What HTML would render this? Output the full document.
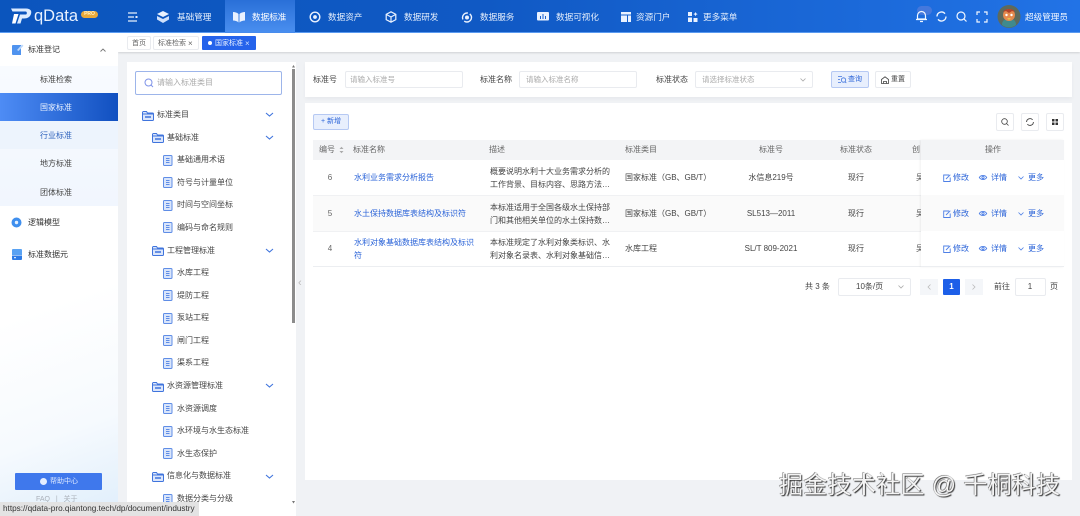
<!DOCTYPE html>
<html lang="zh-CN"><head><meta charset="utf-8"><title>qData</title>
<style>
*{box-sizing:border-box;margin:0;padding:0}
html,body{width:1080px;height:516px;overflow:hidden;background:#f0f2f5}
body{position:relative;font-family:"Liberation Sans","Noto Sans CJK SC",sans-serif;color:#444}
#w{position:absolute;left:0;top:0;width:1080px;height:516px;overflow:hidden;filter:blur(.3px)}
.a,.t,svg.i{position:absolute}
.t{white-space:nowrap;line-height:12px;font-size:8px;height:12px}
.c{transform:translateX(-50%)}
.n{font-size:8.6px;color:#e6effc}
.l{color:#2a63d8}
.g{color:#aaa}
.h{color:#666}
.box{position:absolute;background:#fff;border:1px solid #e9ebef;border-radius:2px}
svg.i{overflow:visible}
</style></head><body>
<svg width="0" height="0" style="position:absolute"><defs>
<g id="fo"><path d="M.5 2.5a1 1 0 0 1 1-1h3l1 1.500h5a1 1 0 0 1 1 1v5.500a1 1 0 0 1-1 1h-9a1 1 0 0 1-1-1z" fill="#dbe6fb" stroke="#3f74dd"/><path d="M.5 4h11" stroke="#3f74dd"/><path d="M3 7h6" stroke="#3f74dd" stroke-width="1.500"/></g>
<g id="do"><rect x=".5" y=".5" width="8.500" height="10" rx="1" fill="#d9e5fb" stroke="#5f8de6"/><path d="M3 3.500h3.500M3 5.500h3.500M3 7.500h3.500" stroke="#5f8de6" stroke-width=".9"/></g>
<path id="dn" d="M0 0l3.500 3 3.500-3" fill="none" stroke="#3f74dd" stroke-width="1.100"/>
<g id="ed" fill="none" stroke="#4f80e6" stroke-width=".9"><path d="M6 1H.7v6.500h6.500V3.500"/><path d="M3 5l4.300-4.300"/></g>
<g id="ey" fill="none" stroke="#4f80e6" stroke-width=".9"><path d="M.3 3.500C2 .8 6 .8 7.700 3.500 6 6.200 2 6.200.3 3.500z"/><circle cx="4" cy="3.500" r="1.100"/></g>
</defs></svg>
<div id="w">
<!-- header -->
<div class="a" style="left:0;top:0;width:1080px;height:33px;background:linear-gradient(90deg,#0b55bd 0%,#1059c4 45%,#2273e6 100%);border-bottom:1px solid #5b9cf2"></div>
<div class="a" style="left:225px;top:0;width:70px;height:33px;background:linear-gradient(180deg,#2a70d8,#4a8ff0)"></div>
<svg class="i" style="left:11px;top:8px" width="21" height="16" viewBox="0 0 21 16"><path d="M0 .5h15c4.500 0 6 2.500 5 5.500-1 3-3.500 4.500-7 4.500h-2l-1.500 5H6l3-9h6c1 0 1.500-3-.5-3H1.500z" fill="#dcecff"/><path d="M3 6h4.500L4.500 15.500H1z" fill="#fff"/></svg>
<div class="t" style="left:34px;top:6px;font-size:16.500px;line-height:20px;height:20px;color:#e8f1ff">qData</div>
<div class="a" style="left:81px;top:11px;width:17px;height:7px;border-radius:3.500px;background:#e9a93b;color:#fff2c8;font-size:5px;line-height:7px;text-align:center;font-weight:bold">PRO</div>
<svg class="i" style="left:128px;top:12px" width="10" height="10" viewBox="0 0 10 10"><path d="M0 1h9M0 5h6M0 9h9" stroke="#e6effc" stroke-width="1.200"/><rect x="7.500" y="4" width="2" height="2" fill="#e6effc"/></svg>
<svg class="i" style="left:157px;top:11px" width="12" height="12" viewBox="0 0 12 12"><path d="M6 0l6 3-6 3-6-3z" fill="#eaf2ff"/><path d="M0 5l6 3 6-3v3.500L6 12 0 8.500z" fill="#cfe0fb"/></svg>
<div class="t n" style="left:177px;top:11px">基础管理</div>
<svg class="i" style="left:233px;top:11px" width="12" height="12" viewBox="0 0 12 12"><path d="M0 1c2 0 4 .5 5.500 2v8.500C4 10 2 9.500 0 9.500zM12 1c-2 0-4 .5-5.500 2v8.500C8 10 10 9.500 12 9.500z" fill="#eaf2ff"/></svg>
<div class="t n" style="left:252px;top:11px;color:#fff">数据标准</div>
<svg class="i" style="left:309px;top:11px" width="12" height="12" viewBox="0 0 12 12"><circle cx="6" cy="6" r="4.800" fill="none" stroke="#eaf2ff" stroke-width="1.400"/><circle cx="6" cy="6" r="1.900" fill="#eaf2ff"/></svg>
<div class="t n" style="left:328px;top:11px">数据资产</div>
<svg class="i" style="left:385px;top:11px" width="12" height="12" viewBox="0 0 12 12"><path d="M6 .8l4.800 2.600v5.200L6 11.200 1.200 8.600V3.400zM1.200 3.400L6 6l4.800-2.600M6 6v5.200" fill="none" stroke="#eaf2ff" stroke-width="1.200"/></svg>
<div class="t n" style="left:404px;top:11px">数据研发</div>
<svg class="i" style="left:461px;top:11px" width="12" height="12" viewBox="0 0 12 12"><circle cx="6" cy="6.500" r="4.500" fill="none" stroke="#eaf2ff" stroke-width="1.400" stroke-dasharray="10 2"/><circle cx="6" cy="6.500" r="2" fill="#eaf2ff"/></svg>
<div class="t n" style="left:480px;top:11px">数据服务</div>
<svg class="i" style="left:537px;top:12px" width="12" height="10" viewBox="0 0 12 10"><rect width="12" height="8.500" rx="1" fill="#eaf2ff"/><path d="M3.500 7V4M6 7V2M8.500 7V4" stroke="#1a62cf" stroke-width="1"/></svg>
<div class="t n" style="left:556px;top:11px">数据可视化</div>
<svg class="i" style="left:621px;top:12px" width="10" height="10" viewBox="0 0 10 10"><path d="M0 0h10v2.500H0zM0 3.500h6V10H0zM7 3.500h3V10H7z" fill="#eaf2ff"/></svg>
<div class="t n" style="left:636px;top:11px">资源门户</div>
<svg class="i" style="left:688px;top:12px" width="10" height="10" viewBox="0 0 10 10"><path d="M0 0h4v4H0zM0 5.500h4v4.500H0zM5.500 6h4v4h-4z" fill="#eaf2ff"/><path d="M7.500 0l.7 1.400 1.500.7-1.500.7-.7 1.500-.7-1.500-1.500-.7 1.500-.7z" fill="#eaf2ff"/></svg>
<div class="t n" style="left:703px;top:11px">更多菜单</div>
<div class="a" style="left:917px;top:6px;width:15px;height:9px;border-radius:5px;background:#5a7fdc;opacity:.65"></div>
<svg class="i" style="left:916px;top:10px" width="11" height="12" viewBox="0 0 11 12"><path d="M1.500 9V5.500a4 4 0 0 1 8 0V9zM0 9.500h11M4 11.500h3" fill="none" stroke="#f0f6ff" stroke-width="1.200"/></svg>
<svg class="i" style="left:936px;top:11px" width="11" height="11" viewBox="0 0 11 11"><path d="M1 5.500a4.500 4.500 0 0 1 8-2.800M10 5.500a4.500 4.500 0 0 1-8 2.800" fill="none" stroke="#f0f6ff" stroke-width="1.300"/></svg>
<svg class="i" style="left:956px;top:11px" width="11" height="11" viewBox="0 0 11 11"><circle cx="5" cy="5" r="4" fill="none" stroke="#f0f6ff" stroke-width="1.200"/><path d="M8 8l2.500 2.500" stroke="#f0f6ff" stroke-width="1.200"/></svg>
<svg class="i" style="left:977px;top:12px" width="10" height="10" viewBox="0 0 10 10"><path d="M0 3V0h3M7 0h3v3M10 7v3H7M3 10H0V7" fill="none" stroke="#f0f6ff" stroke-width="1.200"/></svg>
<svg class="i" style="left:997px;top:5px" width="24" height="23" viewBox="0 0 24 23"><circle cx="12" cy="11.500" r="11.500" fill="#5d6a5c"/><path d="M5 20c0-5 3-6 7-6s7 1 7 6a11.500 11.500 0 0 1-14 0z" fill="#3f8a8d"/><circle cx="12" cy="10" r="6" fill="#e58a4e"/><path d="M6 7c2-4 10-4 12 0l-3-1-3 2-3-2z" fill="#b3432c"/><circle cx="9.500" cy="10" r="1.200" fill="#fff"/><circle cx="14.500" cy="10" r="1.200" fill="#fff"/><path d="M10 13h4l-2 2z" fill="#e8c24a"/></svg>
<div class="t" style="left:1025px;top:11px;font-size:8.600px;color:#f0f6ff">超级管理员</div>

<!-- tabs -->
<div class="a" style="left:118px;top:33px;width:962px;height:19px;background:#fff;box-shadow:0 1px 2px rgba(0,0,0,.14)"></div>
<div class="box" style="left:127px;top:36px;width:24px;height:14px"></div>
<div class="t c h" style="left:139px;top:37.500px;font-size:7px">首页</div>
<div class="box" style="left:153px;top:36px;width:46px;height:14px"></div>
<div class="t h" style="left:158px;top:37.500px;font-size:7px">标准检索</div>
<div class="t h" style="left:188px;top:37.500px;font-size:8px">×</div>
<div class="a" style="left:202px;top:36px;width:54px;height:14px;background:#2563eb;border-radius:1px"></div>
<div class="a" style="left:208px;top:41px;width:4px;height:4px;border-radius:50%;background:#fff"></div>
<div class="t" style="left:215px;top:37.500px;font-size:7px;color:#e6efff">国家标准</div>
<div class="t" style="left:245px;top:37.500px;color:#cfe0ff">×</div>

<!-- sidebar -->
<div class="a" style="left:0;top:33px;width:118px;height:483px;background:linear-gradient(160deg,#fff 55%,#f6fafe 80%,#dfeefb 100%)"></div>
<div class="a" style="left:0;top:66px;width:118px;height:140px;background:linear-gradient(180deg,#f8fbff,#f1f6fe)"></div>
<div class="a" style="left:0;top:93px;width:118px;height:28px;background:linear-gradient(90deg,#4e8cf5,#1150c0)"></div>
<div class="a" style="left:0;top:121px;width:118px;height:28px;background:#edf4fd"></div>
<svg class="i" style="left:12px;top:44px" width="12" height="11" viewBox="0 0 12 11"><path d="M0 2a1 1 0 0 1 1-1h8v10H1a1 1 0 0 1-1-1z" fill="#4f93ef"/><path d="M5 6l5-5.500 1.500 1.200L6.500 7z" fill="#bcd8fb"/></svg>
<div class="t" style="left:28px;top:43.500px;color:#333">标准登记</div>
<svg class="i" style="left:100px;top:48px" width="6" height="4" viewBox="0 0 6 4"><path d="M.5 3.500L3 1l2.500 2.500" fill="none" stroke="#777" stroke-width=".9"/></svg>
<div class="t" style="left:40px;top:73.500px;color:#444">标准检索</div>
<div class="t" style="left:40px;top:101.500px;color:#eaf2ff">国家标准</div>
<div class="t" style="left:40px;top:129.500px;color:#2f63bd">行业标准</div>
<div class="t" style="left:40px;top:158px;color:#444">地方标准</div>
<div class="t" style="left:40px;top:186.500px;color:#444">团体标准</div>
<svg class="i" style="left:11px;top:217px" width="11" height="11" viewBox="0 0 11 11"><circle cx="5.500" cy="5.500" r="5" fill="#3f8fee"/><circle cx="5.500" cy="5.500" r="1.700" fill="#e5f1ff"/></svg>
<div class="t" style="left:28px;top:216.500px;color:#333">逻辑模型</div>
<svg class="i" style="left:12px;top:249px" width="10" height="11" viewBox="0 0 10 11"><path d="M0 1a1 1 0 0 1 1-1h8a1 1 0 0 1 1 1v5H0z" fill="#59a2f3"/><path d="M0 6.500h10V10a1 1 0 0 1-1 1H1a1 1 0 0 1-1-1z" fill="#2d7be6"/><path d="M2 8.700h2" stroke="#fff"/></svg>
<div class="t" style="left:28px;top:248.500px;color:#333">标准数据元</div>
<div class="a" style="left:15px;top:473px;width:87px;height:17px;background:#3f78ec;border-radius:1px"></div>
<div class="a" style="left:40px;top:478px;width:7px;height:7px;border-radius:50%;background:#e5eeff"></div>
<div class="t" style="left:50px;top:476px;font-size:7px;color:#dfeaff">帮助中心</div>
<div class="t" style="left:36px;top:494px;font-size:7px;color:#aab0b8">FAQ &nbsp; | &nbsp; 关于</div>

<!-- tree panel -->
<div class="a" style="left:127px;top:62px;width:169px;height:454px;background:#fff"></div>
<div class="a" style="left:135px;top:71px;width:147px;height:24px;background:#fff;border:1px solid #9db5ea;border-radius:2px"></div>
<svg class="i" style="left:144px;top:78px" width="10" height="10" viewBox="0 0 10 10"><circle cx="4.500" cy="4.500" r="3.500" fill="none" stroke="#7f93e8" stroke-width="1"/><path d="M7 7l2 2" stroke="#7f93e8"/></svg>
<div class="t g" style="left:157px;top:77px">请输入标准类目</div>
<div class="a" style="left:292px;top:69px;width:3px;height:254px;background:#8c8c8c"></div>
<svg class="i" style="left:292px;top:64.500px" width="3" height="3"><path d="M1.500 0L3 2.500H0z" fill="#777"/></svg>
<svg class="i" style="left:292px;top:501px" width="3" height="3"><path d="M1.500 2.500L3 0H0z" fill="#777"/></svg>
<svg class="i" style="left:142px;top:110px" width="12" height="11" viewBox="0 0 12 11"><use href="#fo"/></svg>
<div class="t" style="left:157px;top:109px">标准类目</div>
<svg class="i" style="left:266px;top:113px" width="7" height="4"><use href="#dn"/></svg>

<svg class="i" style="left:152px;top:132px" width="12" height="11"><use href="#fo"/></svg>
<div class="t" style="left:167px;top:131.500px">基础标准</div>
<svg class="i" style="left:266px;top:136px" width="7" height="4"><use href="#dn"/></svg>
<svg class="i" style="left:163px;top:155px" width="10" height="11"><use href="#do"/></svg>
<div class="t" style="left:177px;top:154px">基础通用术语</div>
<svg class="i" style="left:163px;top:177px" width="10" height="11"><use href="#do"/></svg>
<div class="t" style="left:177px;top:176.500px">符号与计量单位</div>
<svg class="i" style="left:163px;top:200px" width="10" height="11"><use href="#do"/></svg>
<div class="t" style="left:177px;top:199px">时间与空间坐标</div>
<svg class="i" style="left:163px;top:222px" width="10" height="11"><use href="#do"/></svg>
<div class="t" style="left:177px;top:221.500px">编码与命名规则</div>

<svg class="i" style="left:152px;top:245px" width="12" height="11"><use href="#fo"/></svg>
<div class="t" style="left:167px;top:244.500px">工程管理标准</div>
<svg class="i" style="left:266px;top:249px" width="7" height="4"><use href="#dn"/></svg>
<svg class="i" style="left:163px;top:268px" width="10" height="11"><use href="#do"/></svg>
<div class="t" style="left:177px;top:267px">水库工程</div>
<svg class="i" style="left:163px;top:290px" width="10" height="11"><use href="#do"/></svg>
<div class="t" style="left:177px;top:289.500px">堤防工程</div>
<svg class="i" style="left:163px;top:313px" width="10" height="11"><use href="#do"/></svg>
<div class="t" style="left:177px;top:312px">泵站工程</div>
<svg class="i" style="left:163px;top:335px" width="10" height="11"><use href="#do"/></svg>
<div class="t" style="left:177px;top:334.500px">闸门工程</div>
<svg class="i" style="left:163px;top:358px" width="10" height="11"><use href="#do"/></svg>
<div class="t" style="left:177px;top:357px">渠系工程</div>

<svg class="i" style="left:152px;top:381px" width="12" height="11"><use href="#fo"/></svg>
<div class="t" style="left:167px;top:380px">水资源管理标准</div>
<svg class="i" style="left:266px;top:384px" width="7" height="4"><use href="#dn"/></svg>
<svg class="i" style="left:163px;top:403px" width="10" height="11"><use href="#do"/></svg>
<div class="t" style="left:177px;top:402.500px">水资源调度</div>
<svg class="i" style="left:163px;top:426px" width="10" height="11"><use href="#do"/></svg>
<div class="t" style="left:177px;top:425px">水环境与水生态标准</div>
<svg class="i" style="left:163px;top:448px" width="10" height="11"><use href="#do"/></svg>
<div class="t" style="left:177px;top:447.500px">水生态保护</div>
<svg class="i" style="left:152px;top:471px" width="12" height="11"><use href="#fo"/></svg>
<div class="t" style="left:167px;top:470px">信息化与数据标准</div>
<svg class="i" style="left:266px;top:475px" width="7" height="4"><use href="#dn"/></svg>
<svg class="i" style="left:163px;top:494px" width="10" height="11"><use href="#do"/></svg>
<div class="t" style="left:177px;top:493px">数据分类与分级</div>
<div class="t" style="left:298px;top:277px;color:#bbb;font-size:11px">‹</div>

<!-- form card -->
<div class="a" style="left:305px;top:62px;width:767px;height:35px;background:#fff;box-shadow:0 2px 4px rgba(0,0,0,.04)"></div>
<div class="t" style="left:313px;top:73.500px">标准号</div>
<div class="box" style="left:345px;top:71px;width:118px;height:17px"></div>
<div class="t g" style="left:350px;top:73.500px;font-size:7.500px">请输入标准号</div>
<div class="t" style="left:480px;top:73.500px">标准名称</div>
<div class="box" style="left:519px;top:71px;width:118px;height:17px"></div>
<div class="t g" style="left:526px;top:73.500px;font-size:7.500px">请输入标准名称</div>
<div class="t" style="left:656px;top:73.500px">标准状态</div>
<div class="box" style="left:695px;top:71px;width:118px;height:17px"></div>
<div class="t g" style="left:702px;top:73.500px;font-size:7.500px">请选择标准状态</div>
<svg class="i" style="left:800px;top:78px" width="6" height="4"><path d="M.5.500L3 3 5.500.500" fill="none" stroke="#aaa" stroke-width=".8"/></svg>
<div class="a" style="left:831px;top:71px;width:38px;height:17px;background:#e8effd;border:1px solid #b6c9f3;border-radius:2px"></div>
<svg class="i" style="left:838px;top:76px" width="9" height="8"><path d="M0 .5h4M0 3.500h2M0 6.500h3" stroke="#3f74dd" stroke-width=".8"/><circle cx="5.500" cy="4" r="2.200" fill="none" stroke="#3f74dd" stroke-width=".8"/><path d="M7 5.700l1.300 1.300" stroke="#3f74dd" stroke-width=".8"/></svg>
<div class="t" style="left:848px;top:73.500px;font-size:7px;color:#2a63d8">查询</div>
<div class="box" style="left:875px;top:71px;width:36px;height:17px"></div>
<svg class="i" style="left:881px;top:76px" width="8" height="8"><path d="M.5 7.500V3.500L4 .8l3.500 2.700v4zM2.500 7.500V5.500h3v2" fill="none" stroke="#444" stroke-width=".8"/></svg>
<div class="t" style="left:891px;top:73.500px;font-size:7px;color:#444">重置</div>

<!-- table card -->
<div class="a" style="left:305px;top:103px;width:767px;height:377px;background:#fff"></div>
<div class="a" style="left:313px;top:114px;width:36px;height:16px;background:#e8effd;border:1px solid #b6c9f3;border-radius:2px"></div>
<div class="t c" style="left:331px;top:116px;font-size:7px;color:#2a63d8">+ 新增</div>
<div class="box" style="left:996px;top:113px;width:18px;height:18px"></div>
<svg class="i" style="left:1001px;top:118px" width="8" height="8"><circle cx="3.500" cy="3.500" r="2.800" fill="none" stroke="#444" stroke-width=".8"/><path d="M5.500 5.500L7.500 7.500" stroke="#444" stroke-width=".8"/></svg>
<div class="box" style="left:1021px;top:113px;width:18px;height:18px"></div>
<svg class="i" style="left:1026px;top:118px" width="8" height="8"><path d="M.6 4a3.400 3.400 0 0 1 6-2.200M7.400 4a3.400 3.400 0 0 1-6 2.200" fill="none" stroke="#444" stroke-width=".9"/></svg>
<div class="box" style="left:1046px;top:113px;width:18px;height:18px"></div>
<svg class="i" style="left:1051px;top:118px" width="8" height="8"><path d="M1 1h2.500v2.500H1zM4.500 1H7v2.500H4.500zM1 4.500h2.500V7H1zM4.500 4.500H7V7H4.500z" fill="#333"/></svg>

<div class="a" style="left:313px;top:140px;width:751px;height:20px;background:#f3f4f6"></div>
<div class="a" style="left:313px;top:195px;width:751px;height:36px;background:#fafafa"></div>
<div class="a" style="left:313px;top:195px;width:751px;height:1px;background:#f0f1f3"></div>
<div class="a" style="left:313px;top:231px;width:751px;height:1px;background:#f0f1f3"></div>
<div class="a" style="left:313px;top:266px;width:751px;height:1px;background:#eceef1"></div>
<div class="t h" style="left:319px;top:144px">编号</div>
<svg class="i" style="left:339px;top:146px" width="5" height="8"><path d="M.5 3L2.500.8 4.500 3zM.5 5L2.500 7.200 4.500 5z" fill="#aaa"/></svg>
<div class="t h" style="left:353px;top:144px">标准名称</div>
<div class="t h" style="left:489px;top:144px">描述</div>
<div class="t h" style="left:625px;top:144px">标准类目</div>
<div class="t h c" style="left:771px;top:144px">标准号</div>
<div class="t h c" style="left:856px;top:144px">标准状态</div>
<div class="t h" style="left:912px;top:144px">创</div>
<div class="t" style="left:916px;top:172px;color:#555">吴</div>
<div class="t" style="left:916px;top:207.500px;color:#555">吴</div>
<div class="t" style="left:916px;top:243px;color:#555">吴</div>
<div class="a" style="left:921px;top:140px;width:143px;height:127px;background:#fff;box-shadow:-1px 0 2px rgba(0,0,0,.06)"></div>
<div class="a" style="left:921px;top:140px;width:143px;height:20px;background:#f3f4f6"></div>
<div class="a" style="left:921px;top:195px;width:143px;height:36px;background:#fafafa"></div>
<div class="a" style="left:921px;top:266px;width:143px;height:1px;background:#eceef1"></div>
<div class="t h c" style="left:993px;top:144px">操作</div>

<div class="t h c" style="left:330px;top:172px">6</div>
<div class="t l" style="left:354px;top:172px">水利业务需求分析报告</div>
<div class="t" style="left:490px;top:165px;line-height:13px">概要说明水利十大业务需求分析的</div>
<div class="t" style="left:490px;top:178px;line-height:13px">工作背景、目标内容、思路方法…</div>
<div class="t" style="left:625px;top:172px">国家标准（GB、GB/T）</div>
<div class="t c" style="left:771px;top:172px">水信息219号</div>
<div class="t c" style="left:856px;top:172px">现行</div>

<div class="t h c" style="left:330px;top:207.500px">5</div>
<div class="t l" style="left:354px;top:207.500px">水土保持数据库表结构及标识符</div>
<div class="t" style="left:490px;top:200.500px;line-height:13px">本标准适用于全国各级水土保持部</div>
<div class="t" style="left:490px;top:213.500px;line-height:13px">门和其他相关单位的水土保持数…</div>
<div class="t" style="left:625px;top:207.500px">国家标准（GB、GB/T）</div>
<div class="t c" style="left:771px;top:207.500px">SL513—2011</div>
<div class="t c" style="left:856px;top:207.500px">现行</div>

<div class="t h c" style="left:330px;top:243px">4</div>
<div class="t l" style="left:354px;top:236px;line-height:13px">水利对象基础数据库表结构及标识</div>
<div class="t l" style="left:354px;top:249px;line-height:13px">符</div>
<div class="t" style="left:490px;top:236px;line-height:13px">本标准规定了水利对象类标识、水</div>
<div class="t" style="left:490px;top:249px;line-height:13px">利对象名录表、水利对象基础信…</div>
<div class="t" style="left:625px;top:243px">水库工程</div>
<div class="t c" style="left:771px;top:243px">SL/T 809-2021</div>
<div class="t c" style="left:856px;top:243px">现行</div>

<svg class="i" style="left:943px;top:174px" width="8" height="8"><use href="#ed"/></svg><div class="t l" style="left:953px;top:172px">修改</div>
<svg class="i" style="left:979px;top:174px" width="8" height="7"><use href="#ey"/></svg><div class="t l" style="left:991px;top:172px">详情</div>
<svg class="i" style="left:1018px;top:176px" width="6" height="4"><path d="M.5.500L3 3 5.500.500" fill="none" stroke="#4f80e6" stroke-width=".8"/></svg><div class="t l" style="left:1028px;top:172px">更多</div>
<svg class="i" style="left:943px;top:209.500px" width="8" height="8"><use href="#ed"/></svg><div class="t l" style="left:953px;top:207.500px">修改</div>
<svg class="i" style="left:979px;top:209.500px" width="8" height="7"><use href="#ey"/></svg><div class="t l" style="left:991px;top:207.500px">详情</div>
<svg class="i" style="left:1018px;top:211.500px" width="6" height="4"><path d="M.5.500L3 3 5.500.500" fill="none" stroke="#4f80e6" stroke-width=".8"/></svg><div class="t l" style="left:1028px;top:207.500px">更多</div>
<svg class="i" style="left:943px;top:245px" width="8" height="8"><use href="#ed"/></svg><div class="t l" style="left:953px;top:243px">修改</div>
<svg class="i" style="left:979px;top:245px" width="8" height="7"><use href="#ey"/></svg><div class="t l" style="left:991px;top:243px">详情</div>
<svg class="i" style="left:1018px;top:247px" width="6" height="4"><path d="M.5.500L3 3 5.500.500" fill="none" stroke="#4f80e6" stroke-width=".8"/></svg><div class="t l" style="left:1028px;top:243px">更多</div>

<!-- pagination -->
<div class="t" style="left:805px;top:281px">共 3 条</div>
<div class="box" style="left:838px;top:278px;width:73px;height:18px"></div>
<div class="t" style="left:856px;top:281px">10条/页</div>
<svg class="i" style="left:898px;top:285px" width="6" height="4"><path d="M.5.500L3 3 5.500.500" fill="none" stroke="#aaa" stroke-width=".8"/></svg>
<div class="a" style="left:920px;top:279px;width:18px;height:16px;background:#f4f6f9"></div>
<svg class="i" style="left:927px;top:284px" width="4" height="6"><path d="M3.500.500L1 3l2.500 2.500" fill="none" stroke="#bbb" stroke-width=".8"/></svg>
<div class="a" style="left:943px;top:279px;width:17px;height:16px;background:#1d5fe8;border-radius:1px;color:#fff;font-size:8px;font-weight:bold;line-height:16px;text-align:center">1</div>
<div class="a" style="left:965px;top:279px;width:18px;height:16px;background:#f4f6f9"></div>
<svg class="i" style="left:972px;top:284px" width="4" height="6"><path d="M.5.500L3 3 .5 5.500" fill="none" stroke="#bbb" stroke-width=".8"/></svg>
<div class="t" style="left:994px;top:281px">前往</div>
<div class="box" style="left:1015px;top:278px;width:31px;height:18px"></div>
<div class="t c" style="left:1030px;top:281px">1</div>
<div class="t" style="left:1050px;top:281px">页</div>

<!-- status bar -->
<div class="a" style="left:0;top:502px;width:199px;height:14px;background:#e3e3e3"></div>
<div class="t" style="left:3px;top:503px;font-size:8.200px;color:#333">https://qdata-pro.qiantong.tech/dp/document/industry</div>

<!-- corner mark -->
<div class="t" style="left:779px;top:472px;height:27px;line-height:27px;font-size:24px;color:#f4f4f4;text-shadow:1px 1px 1px #333,-.5px -.5px .5px #666;letter-spacing:.3px">掘金技术社区 @ 千桐科技</div>
</div>
</body></html>
